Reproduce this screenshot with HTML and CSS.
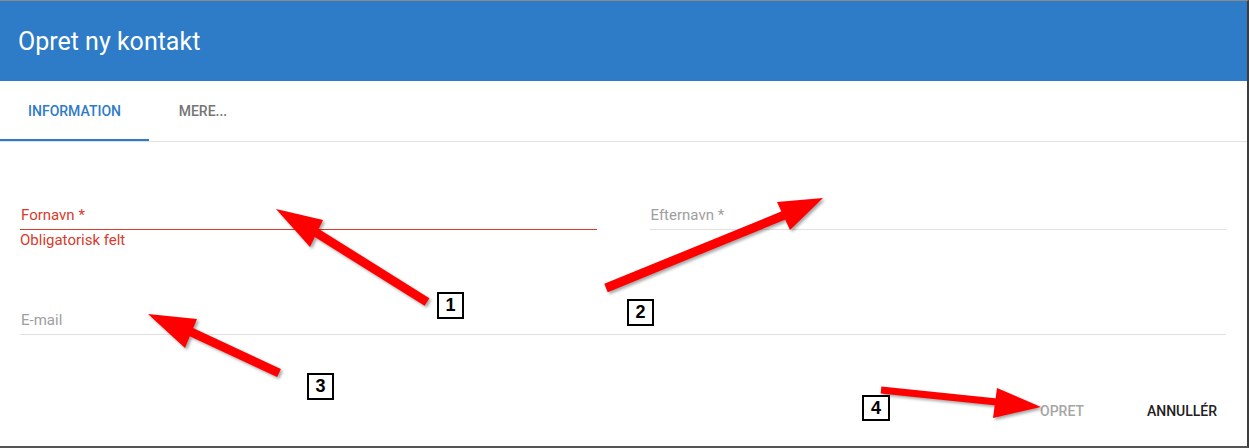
FILE: index.html
```html
<!DOCTYPE html>
<html lang="da">
<head>
<meta charset="utf-8">
<title>Opret ny kontakt</title>
<link rel="stylesheet" href="styles.css">
</head>
<body>
<div class="dialog">
  <header class="dialog-header">Opret ny kontakt</header>

  <nav class="tabs">
    <div class="tab tab-active">Information</div>
    <div class="tab tab-more">Mere...</div>
  </nav>

  <form class="form">
    <div class="row row-names">
      <div class="cell">
        <div class="field field-error"><span class="label">Fornavn *</span></div>
        <div class="hint">Obligatorisk felt</div>
      </div>
      <div class="cell">
        <div class="field"><span class="label">Efternavn *</span></div>
      </div>
    </div>
    <div class="row row-email">
      <div class="field"><span class="label">E-mail</span></div>
    </div>
    <div class="actions">
      <span class="btn btn-disabled">Opret</span>
      <span class="btn">Annullér</span>
    </div>
  </form>

  <!-- numbered callouts drawn over the form -->
  <svg class="callouts" width="1249" height="448" viewBox="0 0 1249 448" aria-hidden="true">
    <g class="arrow">
      <line x1="427" y1="302" x2="312" y2="230"/>
      <polygon points="276,209 323,220 310,247"/>
    </g>
    <g class="arrow">
      <line x1="606" y1="288" x2="787" y2="214"/>
      <polygon points="823,198 777,202 790,230"/>
    </g>
    <g class="arrow">
      <line x1="279" y1="373" x2="189" y2="331"/>
      <polygon points="148,314 197,319 185,348"/>
    </g>
    <g class="arrow arrow-thin">
      <line x1="881" y1="390" x2="997" y2="402"/>
      <polygon points="1041,407 997,388 993,418"/>
    </g>
  </svg>
  <div class="badge badge-1">1</div>
  <div class="badge badge-2">2</div>
  <div class="badge badge-3">3</div>
  <div class="badge badge-4">4</div>
</div>
</body>
</html>
```

FILE: styles.css
```css
html, body {
  margin: 0;
  padding: 0;
  background: #ffffff;
}

body {
  font-family: Roboto, "Noto Sans", Arial, sans-serif;
  width: 1249px;
  height: 448px;
  overflow: hidden;
}

.dialog {
  position: relative;
  width: 1247px;
  height: 445px;
  background: #ffffff;
  border-top: 1px solid #8a8a8a;
  border-right: 2px solid #3d3d3d;
  border-bottom: 2px solid #555555;
  display: flex;
  flex-direction: column;
}

.dialog-header {
  height: 80px;
  line-height: 82px;
  padding-left: 18px;
  background: #2e7bc8;
  color: #ffffff;
  font-size: 25px;
  font-weight: 400;
}

.tabs {
  display: flex;
  height: 60px;
  border-bottom: 1px solid #e0e0e0;
}

.tab {
  box-sizing: border-box;
  height: 60px;
  line-height: 60px;
  text-align: center;
  font-size: 14px;
  font-weight: 500;
  text-transform: uppercase;
  color: #757575;
}

.tab-active {
  width: 149px;
  color: #2e7bc8;
  border-bottom: 2px solid #2e7bc8;
}

.tab-more {
  width: 108px;
}

.form {
  padding: 63px 21px 0 20px;
  display: flex;
  flex-direction: column;
}

.row-names {
  display: grid;
  grid-template-columns: 1fr 1fr;
  column-gap: 53px;
  align-items: start;
}

.row-email {
  margin-top: 62px;
}

.field {
  padding-bottom: 4px;
  border-bottom: 1px solid #e0e0e0;
}

.label {
  display: block;
  padding-left: 1px;
  line-height: 20px;
  font-size: 15px;
  color: #9e9e9e;
}

.field-error {
  border-bottom-color: #d93a2b;
}

.field-error .label {
  color: #d93a2b;
}

.hint {
  margin-top: 2px;
  line-height: 16px;
  font-size: 15px;
  color: #d93a2b;
}

.actions {
  display: flex;
  justify-content: flex-end;
  gap: 32px;
  margin-top: 59px;
}

.btn {
  min-width: 88px;
  height: 36px;
  line-height: 35px;
  text-align: center;
  font-size: 14px;
  font-weight: 500;
  text-transform: uppercase;
  color: #212121;
}

.btn-disabled {
  color: #a6a6a6;
}

/* callout arrows and numbered badges */
.callouts {
  position: absolute;
  left: 0;
  top: -1px;
  pointer-events: none;
}

.arrow {
  filter: drop-shadow(2px 2px 1.5px rgba(0, 0, 0, 0.35));
}

.arrow line {
  stroke: #ff0000;
  stroke-width: 9;
}

.arrow-thin line {
  stroke-width: 7;
}

.arrow polygon {
  fill: #ff0000;
}

.badge {
  position: absolute;
  box-sizing: border-box;
  width: 27px;
  height: 27px;
  border: 2px solid #000000;
  background: #ffffff;
  font-family: "Liberation Sans", Arial, sans-serif;
  font-weight: 700;
  font-size: 18px;
  line-height: 23px;
  text-align: center;
  color: #000000;
}

.badge-1 { left: 437px; top: 291px; }
.badge-2 { left: 627px; top: 298px; }
.badge-3 { left: 307px; top: 372px; }
.badge-4 { left: 862px; top: 394px; width: 28px; height: 26px; line-height: 22px; }
```
